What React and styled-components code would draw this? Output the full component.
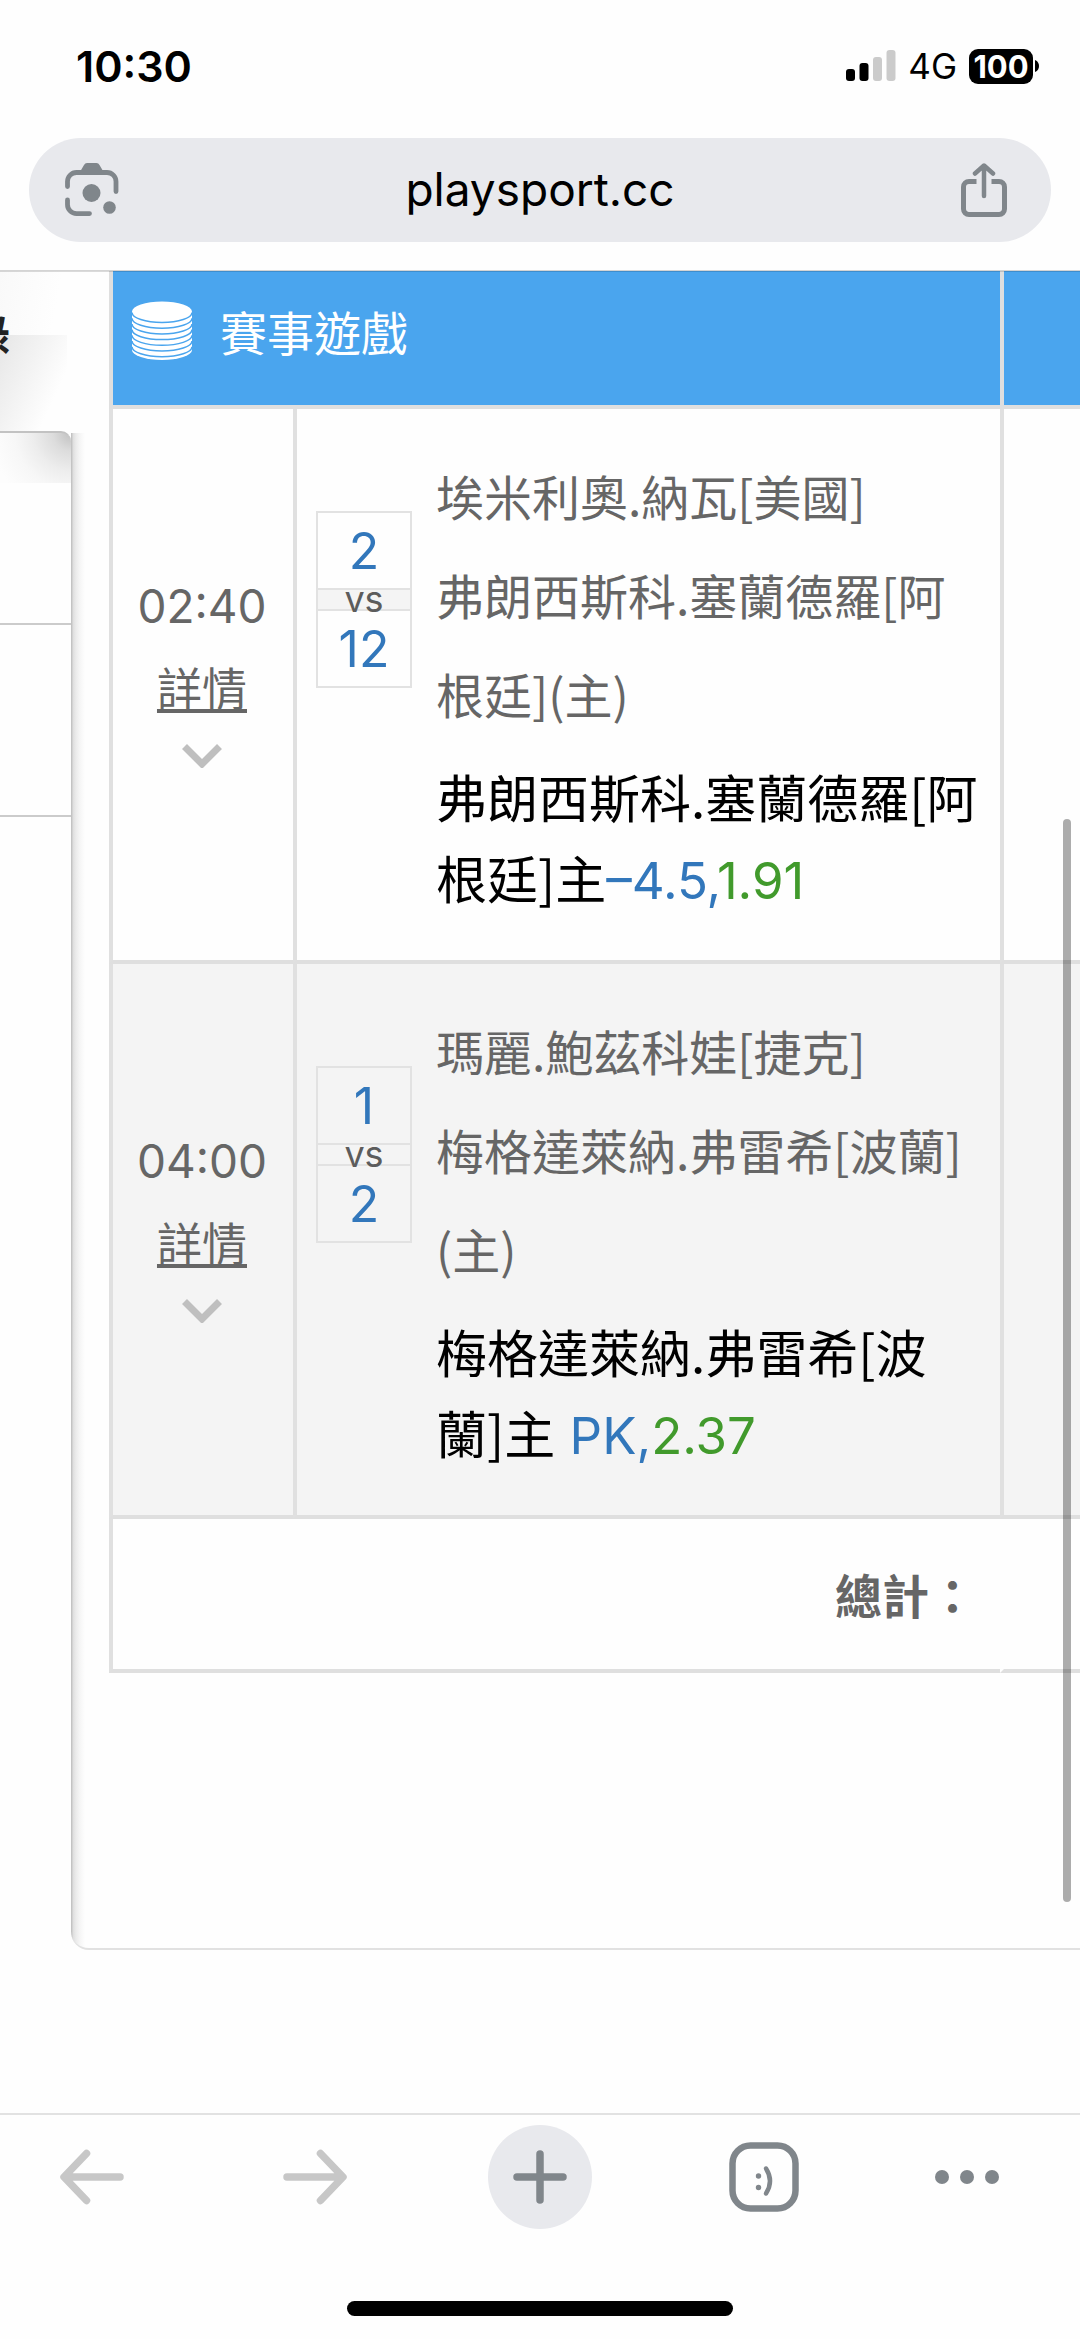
import React from "react";
import styled, { createGlobalStyle } from "styled-components";

const GlobalStyle = createGlobalStyle`
  * { box-sizing: border-box; }
  html, body { margin: 0; padding: 0; background: #fefefe; }
  body { font-family: Inter, "Noto Sans CJK TC", sans-serif; color: #666; }
  button { border: 0; padding: 0; background: none; font: inherit; color: inherit; cursor: pointer; }
`;

const Page = styled.div`
  display: flex;
  flex-direction: column;
  min-height: 100vh;
  overflow: hidden;
`;

/* ---------- browser top ---------- */
const Top = styled.header`
  position: relative;
  z-index: 1;
  padding-bottom: 28px;
  border-bottom: 1px solid #d4d4d4;
  box-shadow: 0 1px rgba(0, 0, 0, 0.14);
`;

const StatusBar = styled.div`
  display: flex;
  align-items: center;
  justify-content: space-between;
  height: 132px;
  padding: 0 40px 0 76px;
  color: #000;
`;

const Clock = styled.time`
  font-size: 43px;
  font-weight: 600;
`;

const StatusIcons = styled.div`
  display: flex;
  align-items: center;
`;

const Network = styled.span`
  margin: 0 12px;
  font-size: 35px;
  font-weight: 400;
`;

const Battery = styled.span`
  display: flex;
  align-items: center;
  justify-content: center;
  width: 64px;
  height: 35px;
  border-radius: 9px;
  background: #000;
  color: #fff;
  font-size: 31px;
  font-weight: 700;
`;

const Omnibox = styled.div`
  display: flex;
  align-items: center;
  height: 104px;
  margin: 6px 29px 0;
  padding: 0 44px 0 36px;
  border-radius: 52px;
  background: #e8e9ed;
`;

const Address = styled.input`
  flex: 1;
  min-width: 0;
  border: 0;
  outline: 0;
  padding: 0 0 3px;
  background: transparent;
  color: #000;
  font: 400 46px Inter, sans-serif;
  text-align: center;
`;

const IconButton = styled.button`
  display: flex;
  align-items: center;
  justify-content: center;
`;

/* ---------- page content ---------- */
const Content = styled.main`
  position: relative;
  display: flex;
  align-items: flex-start;
  flex: 1;
  overflow: hidden;
`;

const Side = styled.aside`
  flex: 0 0 71px;
  overflow: hidden;
`;

const SideTab = styled.div`
  display: flex;
  align-items: center;
  justify-content: flex-end;
  height: 160px;
  padding: 0 61px 38px 0;
  background:
    linear-gradient(100deg, #f9f9f9, #fefefe 80%) 0 0 / 67px 64px no-repeat,
    linear-gradient(115deg, #e6e6e6, #fefefe 75%) 0 64px / 67px 96px no-repeat;
  color: #222;
  font-size: 46px;
  font-weight: 700;
`;

const SideList = styled.ul`
  margin: 0;
  padding: 0;
  list-style: none;
  border-top: 2px solid #c2c2c2;
  border-top-right-radius: 10px;
  background:
    radial-gradient(circle at 100% 0, #c0c0c0, #dcdcdc 18px, #ededed 38px, #f7f7f7 56px, #fdfdfd 80px) 0 0 / 100% 50px no-repeat;
`;

const SideItem = styled.li`
  height: 192px;
  border-bottom: 2px solid #cbcbcb;
`;

const Panel = styled.section`
  flex: 1;
  min-width: 0;
  padding: 0 0 275px 38px;
  border-bottom: 2px solid #e1e1e1;
  border-bottom-left-radius: 18px;
  background:
    linear-gradient(to right, #c0c0c0 0, #c6c6c6 1px, #dedede 2px, #ebebeb 5px, #f6f6f6 9px, #fefefe 14px)
    0 162px / 14px 100% no-repeat;
`;

const Table = styled.table`
  width: 100%;
  table-layout: fixed;
  border-collapse: separate;
  border-spacing: 0;
`;

const HeadCell = styled.th`
  height: 138px;
  padding: 0 0 9px 19px;
  border-left: 4px solid #dfdfdf;
  border-bottom: 4px solid #dfdfdf;
  background: #4aa5ee;
  color: #fff;
  font-size: 47px;
  font-weight: 400;
  text-align: left;
`;

const HeadLabel = styled.span`
  display: flex;
  align-items: center;
  gap: 28px;
  line-height: 66px;
`;

const Row = styled.tr`
  background: ${(p) => (p.$shaded ? "#f4f4f4" : "#fefefe")};
`;

const Cell = styled.td`
  padding: 0;
  border-left: 4px solid #e0e0e0;
  border-bottom: 4px solid #dfdfdf;
`;

const TimeCell = styled(Cell)`
  padding: 0 2px 38px 0;
  text-align: center;
  vertical-align: middle;
`;

const StartTime = styled.time`
  display: block;
  font-size: 46px;
  line-height: 84px;
`;

const Detail = styled.a`
  display: block;
  color: #666;
  font-size: 45px;
  line-height: 84px;
  text-decoration: underline;
`;

const Toggle = styled.button`
  display: block;
  margin: 12px auto 0;
`;

const Match = styled.div`
  display: flex;
  align-items: flex-start;
  padding: 37px 16px 39px 19px;
`;

const Score = styled.div`
  flex: 0 0 96px;
  margin: 65px 24px 0 0;
  border: 2px solid #e2e2e2;
  text-align: center;
`;

const Points = styled.div`
  height: 75px;
  color: #3277bb;
  font-size: 50px;
  line-height: 76px;
`;

const Versus = styled.div`
  height: 23px;
  border: solid #e2e2e2;
  border-width: 2px 0;
  background: #f4f4f4;
  color: #5c5c5c;
  font-size: 36px;
  line-height: 18px;
`;

const Names = styled.div`
  flex: 1;
  min-width: 0;
  font-family: "Noto Sans CJK TC", sans-serif;
`;

const Player = styled.div`
  font-size: 48px;
  line-height: 99px;
`;

const Pick = styled.div`
  margin-top: 13px;
  color: #000;
  font-size: 51px;
  line-height: 81px;
`;

const Spread = styled.span`
  color: #3277bb;
  font-family: Inter, sans-serif;
`;

const Odds = styled(Spread)`
  color: #419a2c;
`;

const TotalCell = styled(Cell)`
  height: 154px;
  padding: 0 24px 2px 0;
  border-left-color: ${(p) => (p.$open ? "#fefefe" : "#e0e0e0")};
  font-size: 47px;
  font-weight: 700;
  text-align: right;
`;

const ScrollThumb = styled.div`
  position: absolute;
  top: 548px;
  right: 9px;
  bottom: 211px;
  width: 8px;
  border-radius: 4px;
  background: rgba(0, 0, 0, 0.32);
`;

/* ---------- browser bottom ---------- */
const Bottom = styled.footer`
  border-top: 2px solid #e2e2e2;
  padding-bottom: 23px;
`;

const Toolbar = styled.nav`
  display: grid;
  grid-template-columns: 183fr 264fr 186fr 261fr 146fr 40fr;
  align-items: center;
  justify-items: center;
  height: 124px;
  margin-bottom: 62px;
`;

const NewTab = styled(IconButton)`
  width: 104px;
  height: 104px;
  border-radius: 50%;
  background: #e8e9ed;
`;

const HomeBar = styled.div`
  width: 386px;
  height: 15px;
  margin: 0 auto;
  border-radius: 8px;
  background: #000;
`;

/* ---------- icons ---------- */
const SignalIcon = () => (
  <svg width="50" height="32" viewBox="0 0 50 32" aria-hidden="true">
    <rect x="0" y="19" width="9" height="12" rx="3" fill="#000" />
    <rect x="13.5" y="13" width="9" height="18" rx="3" fill="#000" />
    <rect x="27" y="7" width="9" height="24" rx="3" fill="#cbcbcb" />
    <rect x="40.5" y="0" width="9" height="31" rx="3" fill="#cbcbcb" />
  </svg>
);

const BatteryTip = () => (
  <svg width="7" height="14" viewBox="0 0 7 14" aria-hidden="true">
    <path d="M2 1C5 2 6 5 6 7S5 12 2 13Z" fill="#000" />
  </svg>
);

const LensIcon = () => (
  <svg width="54" height="54" viewBox="0 0 54 54" fill="none" aria-hidden="true">
    <g stroke="#80868b" strokeWidth="4.8" strokeLinecap="round">
      <path d="M2.5 23.5V18.500A9 9 0 0 1 11.500 9.500H42A9 9 0 0 1 51 18.500V28.500" />
      <path d="M2.5 37V41.500A9 9 0 0 0 11.500 50.600H24.500" />
    </g>
    <path d="M15.500 8L19 2Q20 0 22 0H31.500Q33.500 0 34.500 2L38 8V10H15.500Z" fill="#80868b" />
    <circle cx="26.500" cy="30" r="9" fill="#80868b" />
    <circle cx="44.500" cy="44.500" r="6.300" fill="#80868b" />
  </svg>
);

const ShareIcon = () => (
  <svg width="46" height="54" viewBox="0 0 46 54" fill="none" stroke="#80868b" aria-hidden="true">
    <path strokeWidth="5" d="M15.500 18.500H8A5.500 5.500 0 0 0 2.500 24V46A5.500 5.500 0 0 0 8 51.500H38A5.500 5.500 0 0 0 43.500 46V24A5.500 5.500 0 0 0 38 18.500H30.500" />
    <path strokeWidth="4.500" strokeLinecap="round" strokeLinejoin="round" d="M23 33V3M14 10.500L23 2.500L32 10.500" />
  </svg>
);

const CoinsIcon = () => (
  <svg width="60" height="66" viewBox="0 0 60 66" fill="none" aria-hidden="true">
    <path d="M0 10.500A30 10 0 0 1 60 10.500V49A30 10 0 0 1 0 49Z" fill="#fff" />
    {[0, 1, 2, 3, 4, 5, 6].map((i) => (
      <path
        key={i}
        d={`M0 ${11.5 + i * 5.7}A30 10 0 0 0 60 ${11.5 + i * 5.7}`}
        stroke="#4aa5ee"
        strokeWidth="1.500"
      />
    ))}
  </svg>
);

const ChevronIcon = () => (
  <svg width="40" height="24" viewBox="0 0 40 24" fill="none" aria-hidden="true" style={{ display: "block" }}>
    <path d="M2.500 2.500L20 20L37.500 2.500" stroke="#bfbfbf" strokeWidth="7" />
  </svg>
);

const ArrowIcon = ({ forward }) => (
  <svg width="64" height="56" viewBox="0 0 64 56" fill="none" stroke="#c7c7c7" strokeWidth="7.500" strokeLinecap="round" strokeLinejoin="round" aria-hidden="true">
    <path d={forward ? "M4 28H59M37.500 4.500L60 28L37.500 51.500" : "M60 28H5M26.500 4.500L4 28L26.500 51.500"} />
  </svg>
);

const PlusIcon = () => (
  <svg width="54" height="54" viewBox="0 0 54 54" fill="none" stroke="#80868b" strokeWidth="7.500" strokeLinecap="round" aria-hidden="true">
    <path d="M27 4V50M4 27H50" />
  </svg>
);

const TabsIcon = () => (
  <svg width="70" height="70" viewBox="0 0 70 70" fill="none" stroke="#80868b" aria-hidden="true">
    <rect x="3.500" y="3.500" width="63" height="63" rx="18" strokeWidth="6.500" />
    <circle cx="29.500" cy="34" r="2.700" fill="#80868b" stroke="none" />
    <circle cx="29.500" cy="45.500" r="2.700" fill="#80868b" stroke="none" />
    <path d="M37 26.500Q45 39 37 51.500" strokeWidth="4.500" strokeLinecap="round" />
  </svg>
);

const MoreIcon = () => (
  <svg width="64" height="14" viewBox="0 0 64 14" fill="#80868b" aria-hidden="true">
    <circle cx="7" cy="7" r="7" />
    <circle cx="32" cy="7" r="7" />
    <circle cx="57" cy="7" r="7" />
  </svg>
);

const matches = [
  {
    time: "02:40",
    points: ["2", "12"],
    players: ["埃米利奧.納瓦[美國]", "弗朗西斯科.塞蘭德羅[阿根廷](主)"],
    pick: "弗朗西斯科.塞蘭德羅[阿根廷]主",
    spread: "–4.5,",
    odds: "1.91",
  },
  {
    time: "04:00",
    points: ["1", "2"],
    players: ["瑪麗.鮑茲科娃[捷克]", "梅格達萊納.弗雷希[波蘭](主)"],
    pick: "梅格達萊納.弗雷希[波蘭]主",
    spread: " PK,",
    odds: "2.37",
  },
];

const MatchRow = ({ match, shaded }) => (
  <Row $shaded={shaded}>
    <TimeCell>
      <StartTime>{match.time}</StartTime>
      <Detail href="#detail">詳情</Detail>
      <Toggle type="button" aria-label="展開">
        <ChevronIcon />
      </Toggle>
    </TimeCell>
    <Cell>
      <Match>
        <Score>
          <Points>{match.points[0]}</Points>
          <Versus>vs</Versus>
          <Points>{match.points[1]}</Points>
        </Score>
        <Names>
          {match.players.map((name) => (
            <Player key={name}>{name}</Player>
          ))}
          <Pick>
            {match.pick}
            <Spread>{match.spread}</Spread>
            <Odds>{match.odds}</Odds>
          </Pick>
        </Names>
      </Match>
    </Cell>
    <Cell />
  </Row>
);

export default function App() {
  return (
    <Page lang="zh-Hant">
      <GlobalStyle />
      <Top>
        <StatusBar>
          <Clock>10:30</Clock>
          <StatusIcons>
            <SignalIcon />
            <Network>4G</Network>
            <Battery>100</Battery>
            <BatteryTip />
          </StatusIcons>
        </StatusBar>
        <Omnibox>
          <IconButton type="button" aria-label="Lens">
            <LensIcon />
          </IconButton>
          <Address type="text" aria-label="網址" defaultValue="playsport.cc" />
          <IconButton type="button" aria-label="分享">
            <ShareIcon />
          </IconButton>
        </Omnibox>
      </Top>

      <Content>
        <Side>
          <SideTab>錄</SideTab>
          <SideList>
            <SideItem />
            <SideItem />
          </SideList>
        </Side>
        <Panel>
          <Table>
            <colgroup>
              <col style={{ width: 184 }} />
              <col />
              <col style={{ width: 80 }} />
            </colgroup>
            <thead>
              <tr>
                <HeadCell colSpan={2}>
                  <HeadLabel>
                    <CoinsIcon />
                    賽事遊戲
                  </HeadLabel>
                </HeadCell>
                <HeadCell />
              </tr>
            </thead>
            <tbody>
              {matches.map((match, i) => (
                <MatchRow key={match.time} match={match} shaded={i % 2 === 1} />
              ))}
            </tbody>
            <tfoot>
              <tr>
                <TotalCell colSpan={2}>總計：</TotalCell>
                <TotalCell $open />
              </tr>
            </tfoot>
          </Table>
        </Panel>
        <ScrollThumb />
      </Content>

      <Bottom>
        <Toolbar>
          <IconButton type="button" aria-label="上一頁">
            <ArrowIcon />
          </IconButton>
          <IconButton type="button" aria-label="下一頁">
            <ArrowIcon forward />
          </IconButton>
          <NewTab type="button" aria-label="新分頁">
            <PlusIcon />
          </NewTab>
          <IconButton type="button" aria-label="分頁">
            <TabsIcon />
          </IconButton>
          <IconButton type="button" aria-label="更多">
            <MoreIcon />
          </IconButton>
        </Toolbar>
        <HomeBar />
      </Bottom>
    </Page>
  );
}
